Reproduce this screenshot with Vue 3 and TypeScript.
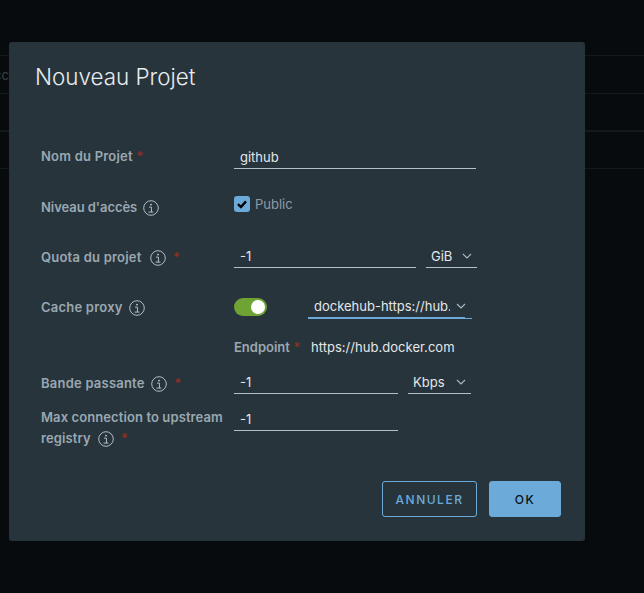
<template>
  <div class="page">
    <div class="bg-table">
      <div class="bg-row"><span class="bg-text">Accès</span></div>
      <div class="bg-row"></div>
      <div class="bg-row thick"></div>
      <div class="bg-row"></div>
    </div>

    <div class="modal">
      <h3 class="title">Nouveau Projet</h3>

      <form class="form" @submit.prevent>
        <div class="row row-name">
          <label class="label">Nom du Projet <span class="req">*</span></label>
          <div class="field"><input class="input w-242" :value="form.name" /></div>
        </div>

        <div class="row row-access">
          <label class="label">Niveau d'accès
            <svg class="info" viewBox="0 0 36 36"><use href="#info-icon" /></svg>
          </label>
          <div class="field check-field">
            <span class="checkbox">
              <svg viewBox="0 0 16 16"><path d="M4 8.2l2.9 2.8L12 5.4" fill="none" stroke="#000" stroke-width="2.4" /></svg>
            </span>
            <span class="check-label">Public</span>
          </div>
        </div>

        <div class="row row-quota">
          <label class="label">Quota du projet
            <svg class="info" viewBox="0 0 36 36"><use href="#info-icon" /></svg>
            <span class="req req-gap">*</span>
          </label>
          <div class="field">
            <input class="input w-182" :value="form.quota" />
            <div class="select w-51">
              <span>GiB</span>
              <svg class="chev" viewBox="0 0 10 6"><path d="M1 1l4 4 4-4" /></svg>
            </div>
          </div>
        </div>

        <div class="row row-cache">
          <label class="label">Cache proxy
            <svg class="info" viewBox="0 0 36 36"><use href="#info-icon" /></svg>
          </label>
          <div class="field">
            <span class="toggle"><span class="knob"></span></span>
            <div class="select select-focus">
              <span class="clip">dockehub-https://hub.docker.com</span>
              <svg class="chev" viewBox="0 0 10 6"><path d="M1 1l4 4 4-4" /></svg>
            </div>
          </div>
        </div>

        <div class="row row-endpoint">
          <span></span>
          <div class="field">
            <span class="endpoint-label">Endpoint <span class="req">*</span></span>
            <span class="endpoint-value">{{ form.endpoint }}</span>
          </div>
        </div>

        <div class="row row-band">
          <label class="label">Bande passante
            <svg class="info" viewBox="0 0 36 36"><use href="#info-icon" /></svg>
            <span class="req req-gap">*</span>
          </label>
          <div class="field">
            <input class="input w-164" :value="form.bandwidth" />
            <div class="select w-63">
              <span>Kbps</span>
              <svg class="chev" viewBox="0 0 10 6"><path d="M1 1l4 4 4-4" /></svg>
            </div>
          </div>
        </div>

        <div class="row row-max">
          <label class="label label-wrap">Max connection to upstream registry
            <svg class="info" viewBox="0 0 36 36"><use href="#info-icon" /></svg>
            <span class="req req-gap">*</span>
          </label>
          <div class="field field-top"><input class="input w-164" :value="form.maxConn" /></div>
        </div>
      </form>

      <div class="footer">
        <button class="btn btn-outline" type="button">ANNULER</button>
        <button class="btn btn-primary" type="button">OK</button>
      </div>
    </div>

    <svg class="defs" width="0" height="0">
      <symbol id="info-icon" viewBox="0 0 36 36">
        <circle cx="18" cy="18" r="16.4" fill="none" stroke="currentColor" stroke-width="2.2" />
        <circle cx="18" cy="10.4" r="2.2" fill="currentColor" />
        <path d="M13.5 16h5.5v11.2M12.5 27.2h11" fill="none" stroke="currentColor" stroke-width="2.2" />
      </symbol>
    </svg>
  </div>
</template>

<script setup lang="ts">
import { reactive } from 'vue'

type ProjectForm = {
  name: string
  quota: string
  endpoint: string
  bandwidth: string
  maxConn: string
}

const form = reactive<ProjectForm>({
  name: 'github',
  quota: '-1',
  endpoint: 'https://hub.docker.com',
  bandwidth: '-1',
  maxConn: '-1'
})
</script>

<style>
html,
body {
  margin: 0;
  background: #080b0e;
}
</style>

<style scoped>
.page {
  position: relative;
  width: 644px;
  height: 593px;
  overflow: hidden;
  background: #080b0e;
  font-family: Inter, "Open Sans", sans-serif;
}

.defs {
  position: absolute;
}

.bg-table {
  padding-top: 55px;
}

.bg-row {
  height: 37.5px;
  box-sizing: border-box;
  border-top: 1px solid #14191c;
  overflow: hidden;
}

.bg-row.thick {
  border-top-width: 2px;
}

.bg-text {
  display: block;
  margin: 11px 0 0 -15px;
  font-size: 13px;
  color: #3c4347;
}

.modal {
  position: absolute;
  left: 9px;
  top: 42px;
  width: 576px;
  height: 499px;
  border-radius: 3px;
  background: #28343c;
  box-sizing: border-box;
  padding: 0 24px 24px 26px;
  display: flex;
  flex-direction: column;
}

.title {
  margin: 20px 0 0;
  font-size: 22.4px;
  line-height: 30px;
  font-weight: 300;
  color: #e9ecef;
}

.form {
  margin: 50px 0 0 6px;
  display: flex;
  flex-direction: column;
}

.row {
  display: grid;
  grid-template-columns: 193px 1fr;
  align-items: center;
}

.row-name { height: 27px; }
.row-access { height: 26px; margin-top: 25px; }
.row-quota { height: 25px; margin-top: 23px; }
.row-cache { height: 25px; margin-top: 26px; }
.row-endpoint { height: 20px; margin-top: 18px; }
.row-band { height: 25px; margin-top: 12px; }
.row-max { height: 41px; margin-top: 12px; align-items: start; }

.row-quota .label,
.row-band .label {
  padding-top: 2px;
}

.label {
  font-size: 13px;
  line-height: 20px;
  font-weight: 600;
  letter-spacing: 0.22px;
  color: #9aa8b1;
  display: block;
}

.row-access .label {
  letter-spacing: -0.06px;
}

.row-quota .info {
  margin-left: 5px;
}

.label-wrap {
  width: 190px;
  line-height: 21px;
  padding-top: 1px;
  letter-spacing: 0.1px;
}

.label-wrap .info {
  margin-left: 4px;
}

.info {
  width: 16px;
  height: 16px;
  margin-left: 3px;
  vertical-align: -4px;
  color: #b4c0c7;
}

.req {
  color: #8b3022;
}

.req-gap {
  margin-left: 7px;
}

.field {
  display: flex;
  align-items: center;
}

.field-top {
  align-items: flex-start;
}

.input {
  height: 25px;
  box-sizing: border-box;
  padding: 2px 6px 0;
  border: 0;
  border-bottom: 1px solid #b4bfc6;
  background: transparent;
  outline: none;
  font: 400 13px Inter, sans-serif;
  color: #e3e7ea;
}

.w-242 { width: 242px; }
.w-182 { width: 182px; }
.w-164 { width: 164px; }

.row-name .input {
  height: 27px;
  padding-top: 3px;
}

.select {
  height: 25px;
  box-sizing: border-box;
  margin-left: 10px;
  padding: 2px 5px 0;
  border-bottom: 1px solid #b4bfc6;
  display: flex;
  align-items: center;
  justify-content: space-between;
  font-size: 13px;
  color: #e3e7ea;
}

.w-51 { width: 51px; }
.w-63 { width: 63px; }

.chev {
  width: 10px;
  height: 6px;
  flex: none;
  fill: none;
  stroke: #adbbc4;
  stroke-width: 1.1;
}

.select-focus {
  position: relative;
  width: 164px;
  margin-left: 41px;
  padding: 0 6px;
  border-bottom: 1px solid #6cabd9;
}

.select-focus::after {
  content: "";
  position: absolute;
  left: 0;
  bottom: 0;
  width: 157px;
  height: 1px;
  background: #6cabd9;
}

.clip {
  width: 136px;
  overflow: hidden;
  white-space: nowrap;
}

.check-field {
  margin-top: -6px;
}

.checkbox {
  width: 16px;
  height: 16px;
  border-radius: 3px;
  background: #6cabd9;
  display: block;
}

.checkbox svg {
  display: block;
}

.check-label {
  margin: -1px 0 0 5px;
  font-size: 13px;
  color: #8d9ba3;
}

.toggle {
  width: 33px;
  height: 18px;
  border-radius: 9px;
  background: #6fa333;
  position: relative;
  display: block;
}

.knob {
  position: absolute;
  right: 2px;
  top: 2px;
  width: 14px;
  height: 14px;
  border-radius: 50%;
  background: #fff;
}

.endpoint-label {
  width: 77px;
  font-size: 13px;
  font-weight: 600;
  color: #9aa8b1;
}

.endpoint-value {
  font-size: 13px;
  letter-spacing: 0.03px;
  color: #e3e7ea;
}

.footer {
  margin-top: auto;
  display: flex;
  justify-content: flex-end;
  gap: 12px;
}

.btn {
  height: 36px;
  box-sizing: border-box;
  border-radius: 3px;
  font: 500 12px Inter, sans-serif;
  letter-spacing: 1.5px;
}

.btn-outline {
  width: 95px;
  background: transparent;
  border: 1px solid #6cabd9;
  color: #6cabd9;
}

.btn-primary {
  width: 72px;
  background: #6cabd9;
  border: 1px solid #6cabd9;
  color: #0a1014;
}
</style>
